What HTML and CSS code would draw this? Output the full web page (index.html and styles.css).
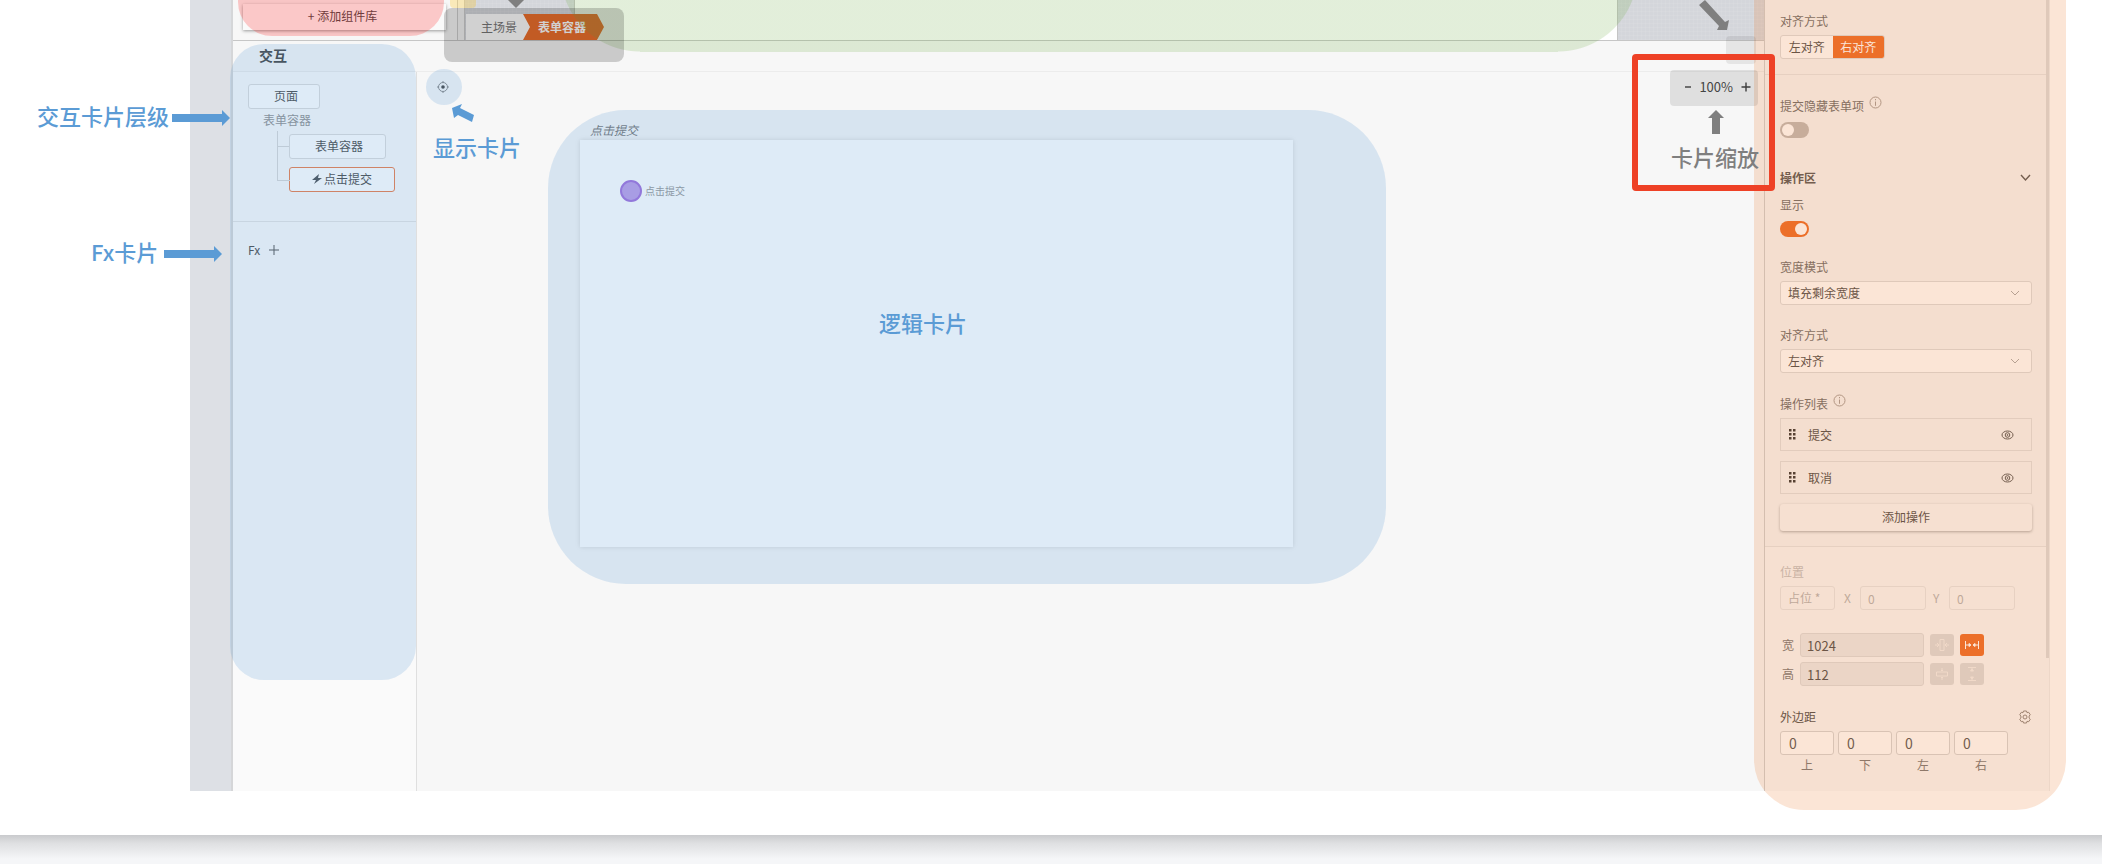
FILE: index.html
```html
<!DOCTYPE html>
<html lang="zh-CN">
<head>
<meta charset="utf-8">
<title>交互卡片</title>
<link rel="stylesheet" href="styles.css">
</head>
<body>
<section class="slide">
  <div class="app">
    <div class="rail"></div>
    <main class="main">
      <div class="top">
        <div class="library"><button class="add-library">+ 添加组件库</button></div>
        <div class="gutter"></div>
        <div class="scene">
          <div class="scene-texture"></div>
          <div class="scene-page"></div>
          <div class="scene-texture scene-rest"></div>
          <nav class="crumbs">
            <a class="crumb" href="#">主场景</a>
            <a class="crumb crumb-active" href="#">表单容器</a>
          </nav>
        </div>
      </div>
      <header class="heading"><h2>交互</h2></header>
      <div class="work">
        <aside class="tree">
          <div class="tree-cards">
            <button class="node node-page">页面</button>
            <p class="tree-label">表单容器</p>
            <div class="branch">
              <button class="node node-form">表单容器</button>
              <button class="node node-click"><svg width="10" height="12" viewBox="0 0 10 12"><path d="M7 1 0 7h4L2 11 10 5H6z" fill="#4c5055"/></svg>点击提交</button>
            </div>
          </div>
          <div class="fx"><span>Fx</span><button class="plain" aria-label="添加 Fx"><svg width="10" height="10" viewBox="0 0 10 10"><path d="M5 0v10M0 5h10" stroke="#555"/></svg></button></div>
        </aside>
        <div class="canvas">
          <div class="tools">
            <button class="plain locate" aria-label="显示卡片"><svg width="12" height="12" viewBox="0 0 12 12"><circle cx="6" cy="6" r="4.5" fill="none" stroke="#8a8a8a"/><circle cx="6" cy="6" r="1.8" fill="#444"/><path d="M6 0v2M6 10v2M0 6h2M10 6h2" stroke="#8a8a8a"/></svg></button>
            <div class="zoom"><button class="plain" aria-label="缩小"><svg width="6" height="10" viewBox="0 0 6 10"><path d="M0 5h6" stroke="#444" stroke-width="1.4"/></svg></button><span>100%</span><button class="plain" aria-label="放大"><svg width="10" height="10" viewBox="0 0 10 10"><path d="M5 .5v9M.5 5h9" stroke="#444" stroke-width="1.4"/></svg></button></div>
          </div>
          <div class="logic">
            <p class="logic-title">点击提交</p>
            <div class="logic-card"><span class="event-dot"></span><span class="event-name">点击提交</span></div>
          </div>
        </div>
      </div>
    </main>
    <aside class="panel">
      <div class="section first">
        <p class="label">对齐方式</p>
        <div class="segmented"><button>左对齐</button><button class="on">右对齐</button></div>
      </div>
      <div class="section middle">
        <label class="label" for="hidden-items">提交隐藏表单项<svg class="info" width="13" height="13" viewBox="0 0 13 13"><circle cx="6.500" cy="6.500" r="5.500" fill="none" stroke="#a59d98"/><path d="M6.500 3v1.300M6.500 5.500v4.300" stroke="#a59d98"/></svg></label>
        <input class="switch" type="checkbox" id="hidden-items">
        <div class="group-head"><strong>操作区</strong><button class="plain" aria-label="折叠"><svg width="13" height="10" viewBox="0 0 13 10"><path d="m2 2 4.500 5L11 2" fill="none" stroke="#555" stroke-width="1.400"/></svg></button></div>
        <label class="label" for="show">显示</label>
        <input class="switch" type="checkbox" id="show" checked>
        <label class="label apart" for="width-mode">宽度模式</label>
        <div class="select"><select id="width-mode"><option>填充剩余宽度</option></select><svg width="10" height="7" viewBox="0 0 10 7"><path d="m1 1 4 4 4-4" fill="none" stroke="#aaa"/></svg></div>
        <label class="label apart" for="align">对齐方式</label>
        <div class="select"><select id="align"><option>左对齐</option></select><svg width="10" height="7" viewBox="0 0 10 7"><path d="m1 1 4 4 4-4" fill="none" stroke="#aaa"/></svg></div>
        <p class="label list-label">操作列表<svg class="info" width="13" height="13" viewBox="0 0 13 13"><circle cx="6.500" cy="6.500" r="5.500" fill="none" stroke="#a59d98"/><path d="M6.500 3v1.300M6.500 5.500v4.300" stroke="#a59d98"/></svg></p>
        <ul class="actions">
          <li><svg width="7" height="11" viewBox="0 0 7 11" fill="#333"><path d="M0 0h2.500v2.500H0zM4 0h2.500v2.500H4zM0 4h2.500v2.500H0zM4 4h2.500v2.500H4zM0 8h2.500v2.500H0zM4 8h2.500v2.500H4z"/></svg><span>提交</span><button class="plain" aria-label="隐藏提交"><svg width="13" height="10" viewBox="0 0 13 10" fill="none" stroke="#555"><ellipse cx="6.500" cy="5" rx="5.500" ry="4"/><circle cx="6.500" cy="5" r="2.300"/><circle cx="6.500" cy="5" r=".5"/></svg></button></li>
          <li><svg width="7" height="11" viewBox="0 0 7 11" fill="#333"><path d="M0 0h2.500v2.500H0zM4 0h2.500v2.500H4zM0 4h2.500v2.500H0zM4 4h2.500v2.500H4zM0 8h2.500v2.500H0zM4 8h2.500v2.500H4z"/></svg><span>取消</span><button class="plain" aria-label="隐藏取消"><svg width="13" height="10" viewBox="0 0 13 10" fill="none" stroke="#555"><ellipse cx="6.500" cy="5" rx="5.500" ry="4"/><circle cx="6.500" cy="5" r="2.300"/><circle cx="6.500" cy="5" r=".5"/></svg></button></li>
        </ul>
        <button class="add-action">添加操作</button>
      </div>
      <div class="section last">
        <div class="position">
          <p class="label">位置</p>
          <div class="position-row">
            <button class="box" disabled>占位 *</button>
            <label for="pos-x">X</label><input class="box" id="pos-x" value="0" disabled>
            <label for="pos-y">Y</label><input class="box" id="pos-y" value="0" disabled>
          </div>
        </div>
        <div class="size-row">
          <label for="w">宽</label><input id="w" value="1024">
          <button aria-label="适应宽度"><svg width="14" height="14" viewBox="0 0 14 14" fill="none" stroke="#f3f0ee"><path d="M5 1.500h4v11H5zM0 7h4M10 7h4M2 5l2 2-2 2M12 5l-2 2 2 2"/></svg></button>
          <button class="on" aria-label="填充宽度"><svg width="14" height="14" viewBox="0 0 14 14" fill="#fff" stroke="#fff"><path d="M.5 3v8M13.500 3v8M1 7h4M9 7h4M4 5.500 6 7 4 8.500zM10 5.500 8 7l2 1.500z"/></svg></button>
        </div>
        <div class="size-row">
          <label for="h">高</label><input id="h" value="112">
          <button aria-label="适应高度"><svg width="14" height="14" viewBox="0 0 14 14" fill="none" stroke="#f3f0ee"><path d="M1.500 5h11v4H1.500zM7 1v3M7 10v3M6 3l1 1 1-1M6 11l1-1 1 1"/></svg></button>
          <button aria-label="填充高度"><svg width="14" height="14" viewBox="0 0 14 14" fill="#f3f0ee" stroke="#f3f0ee"><path d="M3 .5h8M3 13.500h8M7 1v3M7 10v3M5.500 4 7 2l1.500 2zM5.500 10 7 12l1.500-2z"/></svg></button>
        </div>
        <div class="margin-head"><span>外边距</span><button class="plain" aria-label="外边距设置"><svg width="14" height="14" viewBox="0 0 14 14" fill="none" stroke="#8b8580"><path d="M5.500 1h3l.5 1.700 1.700-.4 1.600 2.500L11.100 6v2l1.200 1.200-1.600 2.500-1.700-.4-.5 1.700h-3L5 11.300l-1.700.4-1.600-2.500L2.900 8V6L1.700 4.800l1.600-2.500L5 2.700z"/><circle cx="7" cy="7" r="2"/></svg></button></div>
        <div class="margins">
          <label><input value="0">上</label>
          <label><input value="0">下</label>
          <label><input value="0">左</label>
          <label><input value="0">右</label>
        </div>
      </div>
      <div class="scroll-thumb"></div>
    </aside>
  </div>

  <div class="zone zone-library"></div>
  <div class="zone zone-strip"></div>
  <div class="zone zone-scene"></div>
  <div class="zone zone-crumbs"></div>
  <div class="zone zone-tree"></div>
  <div class="zone zone-locate"></div>
  <div class="zone zone-logic"></div>
  <div class="zone zone-panel"></div>
  <div class="zone zone-corner"></div>
  <div class="zone zone-zoom"></div>

  <div class="note note-tree">交互卡片层级</div>
  <svg class="arrow arrow-tree" width="58" height="16" viewBox="0 0 58 16"><path d="M0 4h50V0l8 8-8 8v-4H0z"/></svg>
  <div class="note note-fx">Fx卡片</div>
  <svg class="arrow arrow-fx" width="58" height="16" viewBox="0 0 58 16"><path d="M0 4h50V0l8 8-8 8v-4H0z"/></svg>
  <svg class="arrow arrow-locate" width="23" height="19" viewBox="0 0 23 19"><path d="M0 4 10 0 8 4 22 11 20 18 6 11 2 14z"/></svg>
  <div class="note note-locate">显示卡片</div>
  <div class="note note-logic">逻辑卡片</div>
  <svg class="arrow gray arrow-crumbs" width="16" height="8" viewBox="0 0 16 8"><path d="M0 0h16L8 8z"/></svg>
  <svg class="arrow gray arrow-corner" width="32" height="31" viewBox="0 0 32 31"><path d="M0 5 6 0 26 22 30 20 28 30 18 30 20 26z"/></svg>
  <svg class="arrow gray arrow-zoom" width="16" height="24" viewBox="0 0 16 24"><path d="m8 0 8 8h-4v16H4V8H0z"/></svg>
  <div class="note gray note-zoom">卡片缩放</div>
  <div class="highlight"></div>
</section>
<div class="next-slide"></div>
</body>
</html>
```

FILE: styles.css
```css
* { box-sizing: border-box; }
body {
  margin: 0;
  overflow-x: hidden;
  background: #f5f6f8;
  font-family: "Noto Sans CJK SC", sans-serif;
  font-size: 12px;
  line-height: 20px;
  color: #4c4c4c;
}
p, h2, ul { margin: 0; padding: 0; }
button, input, select { font: inherit; color: inherit; margin: 0; }
button { padding: 0; border: 0; background: none; }
svg { display: block; flex: none; }
.plain { display: flex; align-items: center; }

.slide { position: relative; padding: 0 52px 44px 190px; background: #fff; }
.next-slide { height: 28px; background: linear-gradient(#c9cacd, #dedfe1 8px, #f5f6f8 24px); }
.app { display: flex; background: #f7f7f7; }
.rail { width: 43px; background: #dde0e5; border-right: 2px solid #d5d6d8; }
.main { flex: 1; display: flex; flex-direction: column; min-width: 0; }

.top { display: flex; height: 41px; border-bottom: 1px solid #c6c6c6; }
.library { width: 224px; padding: 4px 10px 0; }
.add-library { width: 203px; height: 26px; padding-bottom: 2px; padding-right: 4px; background: #fafafa; box-shadow: 0 1px 3px #999; }
.gutter { width: 8px; border: solid #ccc; border-width: 0 1px; background: #f5f5f5; }
.scene { position: relative; flex: 1; display: flex; }
.scene-texture {
  width: 109px;
  background: repeating-linear-gradient(90deg, #0000 0 3px, #ffffff10 3px 4px), repeating-linear-gradient(#0000 0 3px, #ffffff10 3px 4px), #d4d6db;
}
.scene-page { flex: 1; background: #fff; border: solid #c5c5c5; border-width: 0 1px; }
.scene-rest { width: 146px; }
.crumbs { position: absolute; left: 1px; top: 14px; display: flex; height: 26px; line-height: 25px; }
.crumb { width: 64px; padding-left: 15px; background: #fff; color: #777; text-decoration: none; }
.crumb-active {
  width: 81px;
  margin-left: -7px;
  background: #ed702d;
  color: #fff;
  font-weight: 700;
  clip-path: polygon(0 0, 74px 0, 100% 50%, 74px 100%, 0 100%, 7px 50%);
}
.heading { height: 31px; padding-left: 26px; border-bottom: 1px solid #ececec; }
.heading h2 { font-size: 14px; line-height: 28px; font-weight: 700; color: #444; }
.work { flex: 1; display: flex; }

.tree { width: 184px; background: #fafafa; border-right: 1px solid #dfdfdf; }
.tree-cards { height: 150px; padding: 12px 15px; border-bottom: 1px solid #e4e4e4; }
.node { display: flex; align-items: center; height: 25px; padding-bottom: 2px; border: 1px solid #dcdcdc; border-radius: 3px; background: #fff; }
.node-page { width: 72px; padding-left: 25px; }
.tree-label { margin: 1px 0 0 15px; line-height: 20px; color: #929292; }
.branch { position: relative; display: flex; flex-direction: column; gap: 8px; margin: 4px 0 0 29px; padding-left: 12px; }
.branch::before { content: ""; position: absolute; left: 0; top: -3px; width: 12px; height: 49px; border: solid #d8d8d8; border-width: 0 0 1px 1px; }
.branch::after { content: ""; position: absolute; left: 0; top: 12px; width: 12px; height: 1px; background: #d8d8d8; }
.node-form { width: 97px; padding-left: 25px; }
.node-click { width: 106px; justify-content: center; gap: 2px; border: 1px solid #ed7d4a; }
.fx { display: flex; align-items: center; gap: 9px; padding: 18px 15px; }

.canvas { flex: 1; min-width: 0; }
.tools { display: flex; justify-content: space-between; padding: 5px 13px 0 20px; }
.zoom { display: flex; align-items: center; gap: 8px; font-size: 13px; }
.logic { margin: 23px 0 0 163px; width: 713px; }
.logic-title { padding-left: 10px; font-style: italic; color: #777; }
.logic-card { display: flex; height: 407px; padding: 40px; background: #fff; box-shadow: 0 0 5px #0002; }
.event-dot { width: 22px; height: 22px; border: 2px solid #a070dc; border-radius: 50%; background: #bc9ee8; }
.event-name { margin-left: 3px; font-size: 10px; line-height: 22px; color: #999; }

.panel { position: relative; width: 286px; border-left: 1px solid #cfcfcf; background: #f7f7f7; border-right: 1px solid #eee; }
.scroll-thumb { position: absolute; right: 0; top: 0; width: 3px; height: 658px; background: #dcdcdc; }
.section { padding: 0 17px 0 15px; border-bottom: 1px solid #e5e5e5; }
.section.first { padding-top: 11px; padding-bottom: 15px; }
.section.middle { padding-top: 21px; padding-bottom: 15px; }
.section.last { padding-top: 15px; padding-bottom: 16px; border: 0; background: #f9f9f9; }
.label { display: flex; color: #6c6c6c; margin-bottom: 4px; }
.label.apart { margin-top: 20px; }
.label.list-label { margin-top: 21px; }
.info { margin-left: 5px; }
.segmented { display: flex; width: 105px; height: 24px; line-height: 22px; border: 1px solid #dcdcdc; border-radius: 3px; background: #fff; overflow: hidden; }
.segmented button { flex: 1; padding-bottom: 2px; }
.on { background: #ed6c27; color: #fff; }
.switch { appearance: none; display: block; width: 29px; height: 16px; padding: 2px; margin-top: 6px; border-radius: 8px; background: #bfb9b6; }
.switch::before { content: ""; display: block; width: 12px; height: 12px; border-radius: 50%; background: #fff; }
.switch:checked { background: #ed6c27; }
.switch:checked::before { margin-left: 13px; }
.group-head { display: flex; justify-content: space-between; margin: 30px 0 7px; }
.group-head strong { font-weight: 700; color: #555; }
.select { position: relative; }
.select select { appearance: none; display: block; width: 100%; height: 24px; padding: 0 7px; border: 1px solid #dcdcdc; border-radius: 3px; background: #fff; }
.select svg { position: absolute; right: 12px; top: 9px; }
.actions { display: grid; gap: 10px; list-style: none; }
.actions li { display: flex; align-items: center; height: 33px; padding: 0 17px 0 8px; border: 1px solid #e0e0e0; }
.actions span { flex: 1; margin-left: 12px; }
.add-action { width: 100%; height: 27px; margin-top: 10px; padding-bottom: 2px; border-radius: 3px; background: #f9f9f9; box-shadow: 0 1px 3px #aaa; }

.position { padding-bottom: 1px; opacity: .4; }
.position-row { display: flex; align-items: center; gap: 7px; }
.position-row .box { width: 66px; height: 24px; padding: 0 7px; border: 1px solid #ccc; border-radius: 3px; background: none; }
.position-row button.box { width: 55px; margin-right: 2px; text-align: left; }
.position-row label { width: 9px; }
.size-row { display: flex; align-items: center; margin-top: 5px; padding-left: 2px; }
.position + .size-row { margin-top: 22px; }
.size-row label { width: 18px; color: #777; }
.size-row input { width: 124px; height: 24px; padding: 0 6px; border: 1px solid #dcdcdc; border-radius: 3px; background: #ececec; font-size: 13px; }
.size-row button { display: grid; place-items: center; width: 24px; height: 22px; margin-left: 6px; border-radius: 3px; background: #dcdcdc; }
.size-row button.on { background: #ed6c27; }
.margin-head { display: flex; justify-content: space-between; margin: 21px 0 4px; }
.margins { display: flex; gap: 4px; }
.margins label { display: flex; flex-direction: column; align-items: center; width: 54px; color: #777; }
.margins input { width: 100%; height: 24px; padding: 0 8px; border: 1px solid #d5d5d5; border-radius: 3px; background: #fff; font-size: 14px; color: #555; }

.zone { position: absolute; pointer-events: none; }
.zone-library { left: 238px; top: 0; width: 206px; height: 36px; border-radius: 0 0 34px 34px; background: #ff000033; }
.zone-strip { left: 450px; top: 0; width: 26px; height: 8px; border-radius: 0 0 4px 4px; background: #ffc00040; }
.zone-scene { left: 560px; right: 464px; top: 0; height: 52px; background: radial-gradient(circle 80px at 80px -28px, #70ad4733 79px, #0000 80px) left / 80px 100% no-repeat, linear-gradient(#70ad4733, #70ad4733) center / calc(100% - 160px) 100% no-repeat, radial-gradient(circle 80px at 0 -28px, #70ad4733 79px, #0000 80px) right / 80px 100% no-repeat; }
.zone-crumbs { left: 444px; top: 8px; width: 180px; height: 54px; border-radius: 8px; background: #0000002e; }
.zone-tree { left: 230px; top: 44px; width: 186px; height: 636px; border-radius: 34px; background: #5b9bd533; }
.zone-locate { left: 426px; top: 69px; width: 36px; height: 36px; border-radius: 50%; background: #5b9bd533; }
.zone-logic { left: 548px; top: 110px; width: 838px; height: 474px; border-radius: 78px; background: #5b9bd533; }
.zone-panel { right: 36px; top: 0; width: 312px; height: 810px; border-radius: 0 0 50px 50px; background: #ed7d3133; }
.zone-corner { right: 346px; top: 36px; width: 30px; height: 28px; border-radius: 4px; background: #00000012; }
.zone-zoom { right: 344px; top: 70px; width: 88px; height: 36px; border-radius: 4px; background: #00000018; }

.note { position: absolute; font-size: 22px; line-height: 32px; font-weight: 500; color: #5b9bd5; white-space: nowrap; }
.arrow { position: absolute; fill: #5b9bd5; }
.note.gray { color: #7f7f7f; }
.arrow.gray { fill: #7f7f7f; }
.note-tree { left: 37px; top: 99px; }
.arrow-tree { left: 172px; top: 110px; }
.note-fx { left: 91px; top: 235px; }
.arrow-fx { left: 164px; top: 246px; }
.arrow-locate { left: 452px; top: 104px; }
.note-locate { left: 433px; top: 130px; }
.note-logic { left: 879px; top: 306px; }
.arrow-crumbs { left: 508px; top: 0; }
.arrow-corner { right: 371px; top: 0; }
.arrow-zoom { right: 378px; top: 110px; }
.note-zoom { right: 343px; top: 140px; }
.highlight { position: absolute; right: 327px; top: 54px; width: 143px; height: 137px; border: 6px solid #ee4126; border-radius: 4px; }
```
